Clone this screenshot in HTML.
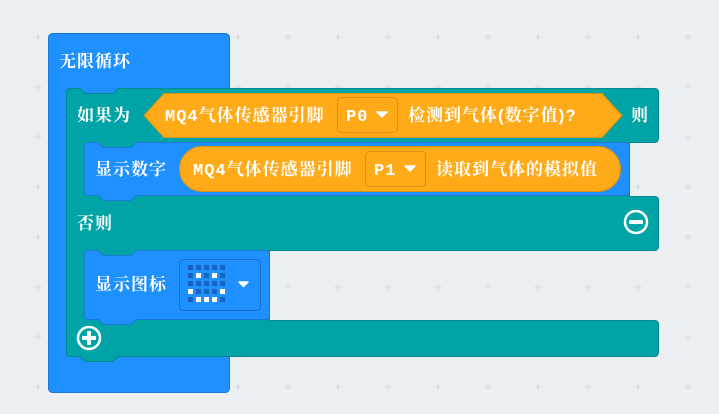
<!DOCTYPE html>
<html><head><meta charset="utf-8"><style>
html,body{margin:0;padding:0;background:#eceff1;}
svg{display:block}
text{font-family:"Liberation Sans","Noto Serif CJK SC",serif;font-weight:bold;fill:#fff;font-size:17px;letter-spacing:1px}
.m{font-family:"Liberation Mono","Noto Serif CJK SC",monospace}
</style></head><body>
<svg width="719" height="414" viewBox="0 0 719 414" xmlns="http://www.w3.org/2000/svg">
<defs>
<pattern id="g" x="34" y="33" width="50" height="50" patternUnits="userSpaceOnUse">
<path d="M4 0.5V7.5M0.5 4H7.5" stroke="#d6dadd" stroke-width="1"/>
</pattern>
</defs>
<rect width="719" height="414" fill="#eceff1"/>
<rect width="719" height="414" fill="url(#g)"/>

<rect x="48.5" y="33.5" width="181" height="359" rx="4" fill="#1e90ff" stroke="#1a78d6"/>
<text x="59" y="67">无限循环</text>

<path d="M70 88.5 H80 L85 93.5 H113 L118 88.5 H654 Q658.5 88.5 658.5 92 V138 Q658.5 142.5 654 142.5 H629.5 V196.5 H654 Q658.5 196.5 658.5 200 V246 Q658.5 250.5 654 250.5 H269.5 V320.5 H654 Q658.5 320.5 658.5 324 V352 Q658.5 356.5 654 356.5 H118 L113 361.5 H85 L80 356.5 H70 Q66.5 356.5 66.5 352 V92 Q66.5 88.5 70 88.5 Z" fill="#00a4a6" stroke="#00898b"/>
<text x="77" y="121">如果为</text>
<text x="77" y="229">否则</text>
<text x="631" y="121">则</text>

<path d="M164 93.5 H602 L622 115.5 L602 137.5 H164 L144 115.5 Z" fill="#ffab19" stroke="#d99312"/>
<text x="165" y="121"><tspan class="m">MQ4</tspan>气体传感器引脚</text>
<rect x="337.5" y="97.5" width="60" height="35" rx="4" fill="#ffab19" stroke="#d99312"/>
<text class="m" x="346" y="121">P0</text>
<path d="M377 112 h10 l-5 5 z" fill="#fff" stroke="#fff" stroke-linejoin="round" stroke-width="1.5"/>
<text x="408" y="121">检测到气体(数字值)?</text>

<path d="M88 142.5 H98 L103 147.5 H131 L136 142.5 H625.5 Q629.5 142.5 629.5 146 V192 Q629.5 195.5 626 195.5 H136 L131 200.5 H103 L98 195.5 H88 Q84.5 195.5 84.5 192 V146 Q84.5 142.5 88 142.5 Z" fill="#1e90ff" stroke="#1a78d6"/>
<text x="95" y="175">显示数字</text>
<rect x="179.5" y="146.5" width="441" height="45" rx="22.5" fill="#ffab19" stroke="#d99312"/>
<text x="193" y="175"><tspan class="m">MQ4</tspan>气体传感器引脚</text>
<rect x="365.5" y="151.5" width="60" height="35" rx="4" fill="#ffab19" stroke="#d99312"/>
<text class="m" x="374" y="175">P1</text>
<path d="M405 166 h10 l-5 5 z" fill="#fff" stroke="#fff" stroke-linejoin="round" stroke-width="1.5"/>
<text x="436" y="175">读取到气体的模拟值</text>

<circle cx="636" cy="222" r="11" fill="none" stroke="#fff" stroke-width="2.5"/>
<rect x="629" y="220" width="14" height="4" rx="1" fill="#fff"/>

<path d="M88 250.5 H98 L103 255.5 H131 L136 250.5 H266 Q269.5 250.5 269.5 254 V316 Q269.5 319.5 266 319.5 H136 L131 324.5 H103 L98 319.5 H88 Q84.5 319.5 84.5 316 V254 Q84.5 250.5 88 250.5 Z" fill="#1e90ff" stroke="#1a78d6"/>
<text x="95" y="290">显示图标</text>
<rect x="179.5" y="259.5" width="81" height="51" rx="4" fill="#1e90ff" stroke="#1a6fc4"/>
<g fill="#1565c0">
<rect x="188" y="265" width="5" height="5"/><rect x="196" y="265" width="5" height="5"/><rect x="204" y="265" width="5" height="5"/><rect x="212" y="265" width="5" height="5"/><rect x="220" y="265" width="5" height="5"/>
<rect x="188" y="273" width="5" height="5"/><rect x="204" y="273" width="5" height="5"/><rect x="220" y="273" width="5" height="5"/>
<rect x="188" y="281" width="5" height="5"/><rect x="196" y="281" width="5" height="5"/><rect x="204" y="281" width="5" height="5"/><rect x="212" y="281" width="5" height="5"/><rect x="220" y="281" width="5" height="5"/>
<rect x="196" y="289" width="5" height="5"/><rect x="204" y="289" width="5" height="5"/><rect x="212" y="289" width="5" height="5"/>
<rect x="188" y="297" width="5" height="5"/><rect x="220" y="297" width="5" height="5"/>
</g>
<g fill="#fff">
<rect x="196" y="273" width="5" height="5"/><rect x="212" y="273" width="5" height="5"/>
<rect x="188" y="289" width="5" height="5"/><rect x="220" y="289" width="5" height="5"/>
<rect x="196" y="297" width="5" height="5"/><rect x="204" y="297" width="5" height="5"/><rect x="212" y="297" width="5" height="5"/>
</g>
<path d="M239 282 h9 l-4.5 4.5 z" fill="#fff" stroke="#fff" stroke-linejoin="round" stroke-width="1.5"/>

<circle cx="89" cy="338" r="11" fill="none" stroke="#fff" stroke-width="2.5"/>
<rect x="82" y="336" width="14" height="4" rx="1" fill="#fff"/>
<rect x="87" y="331" width="4" height="14" rx="1" fill="#fff"/>
</svg>
</body></html>
